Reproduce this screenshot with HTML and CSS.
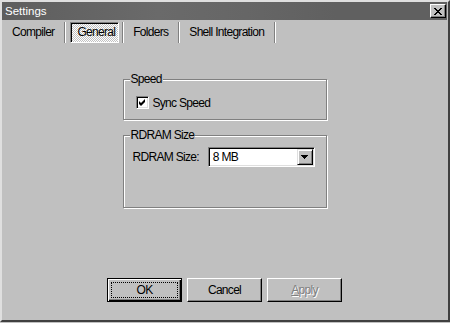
FILE: index.html
```html
<!DOCTYPE html>
<html lang="en">
<head>
    <meta charset="UTF-8">
    <meta name="viewport" content="width=device-width, initial-scale=1.0">
    <title>Settings</title>
    <link rel="stylesheet" href="styles.css">
</head>
<body>
    <div class="window">
        <!-- Title bar -->
        <div class="titlebar">
            <span class="title">Settings</span>
            <button class="close" title="Close">
                <svg width="8" height="7" viewBox="0 0 8 7"><path d="M0 0h2v1H0zM6 0h2v1H6zM1 1h2v1H1zM5 1h2v1H5zM2 2h4v1H2zM3 3h2v1H3zM2 4h4v1H2zM1 5h2v1H1zM5 5h2v1H5zM0 6h2v1H0zM6 6h2v1H6z" fill="#000"/></svg>
            </button>
        </div>

        <!-- Tabs -->
        <div class="tabs">
            <div class="tab">Compiler</div>
            <div class="tab active"><span>General</span></div>
            <div class="tab">Folders</div>
            <div class="tab">Shell Integration</div>
        </div>

        <!-- General page -->
        <div class="panel">
            <fieldset class="group">
                <legend>Speed</legend>
                <label class="check">
                    <span class="checkbox">
                        <svg width="13" height="13" viewBox="0 0 13 13"><polygon points="3,5 5,7 9,3 9,6 5,10 3,8" fill="#000"/></svg>
                    </span>
                    Sync Speed
                </label>
            </fieldset>

            <fieldset class="group tall">
                <legend>RDRAM Size</legend>
                <div class="field">
                    <span class="field-label">RDRAM Size:</span>
                    <div class="combo">
                        <span class="combo-value">8 MB</span>
                        <span class="combo-arrow">
                            <svg width="7" height="4" viewBox="0 0 7 4"><path d="M0 0h7v1H0zM1 1h5v1H1zM2 2h3v1H2zM3 3h1v1H3z" fill="#000"/></svg>
                        </span>
                    </div>
                </div>
            </fieldset>
        </div>

        <!-- Dialog buttons -->
        <div class="buttons">
            <button class="btn default"><span>OK</span></button>
            <button class="btn"><span>Cancel</span></button>
            <button class="btn disabled"><span><u>A</u>pply</span></button>
        </div>
    </div>
</body>
</html>
```

FILE: styles.css
```css
* {
    box-sizing: border-box;
}
body {
    margin: 0;
    background-color: #c0c0c0;
    font-family: "Liberation Sans", Arial, sans-serif;
    font-size: 12px;
    letter-spacing: -0.7px;
    color: #000;
}
.window {
    width: 450px;
    height: 322px;
    display: flex;
    flex-direction: column;
    border: 2px solid;
    border-color: #dfdfdf #404040 #404040 #dfdfdf;
    padding-right: 1px;
}

/* title bar */
.titlebar {
    height: 18px;
    display: flex;
    align-items: center;
    justify-content: space-between;
    padding: 0 1px 0 3px;
    background: linear-gradient(90deg, #5e5e5e, #6a6a6a 35%, #666 55%, #606060 75%);
    color: #fff;
    font-size: 11.5px;
    letter-spacing: 0;
}
.close {
    width: 16px;
    height: 14px;
    padding: 0;
    display: flex;
    align-items: center;
    justify-content: center;
    background-color: #c0c0c0;
    border: 1px solid;
    border-color: #fff #000 #000 #fff;
    box-shadow: inset -1px -1px #808080;
}

/* tabs */
.tabs {
    display: flex;
    height: 21px;
    margin-top: 2px;
}
.tab {
    padding: 0 10px;
    line-height: 21px;
    border-right: 1px solid #808080;
    box-shadow: 1px 0 #fff;
}
.tab.active {
    padding: 0 3px 0 5px;
}
.tab.active span {
    display: block;
    height: 100%;
    padding: 0 3px 0 6px;
    line-height: 19px;
    border: 1px solid;
    border-color: #808080 #fff #fff #808080;
    box-shadow: inset 1px 1px #000;
    background: repeating-conic-gradient(#fff 0 25%, #c0c0c0 0 50%) 0 0 / 2px 2px;
}

/* group boxes */
.panel {
    flex: 1;
    padding-top: 29px;
}
.group {
    width: 204px;
    min-width: 0;
    margin: 0 auto;
    padding: 8px 9px 9px;
    border: 1px solid #808080;
    box-shadow: 1px 1px #fff, inset 1px 1px #fff;
}
.group.tall {
    margin-top: 8px;
    padding: 4px 9px 40px;
}
.group legend {
    padding: 0 1px;
    margin-left: -3px;
    line-height: 15px;
    background-color: #c0c0c0;
}
.check {
    display: flex;
    align-items: center;
    gap: 4px;
    height: 15px;
    margin-left: 3px;
}
.checkbox {
    width: 13px;
    height: 13px;
    display: block;
    background-color: #fff;
    border: 1px solid;
    border-color: #808080 #fff #fff #808080;
    box-shadow: inset 1px 1px #000, inset -1px -1px #dfdfdf;
}
.checkbox svg {
    display: block;
    margin: -1px;
}
.field {
    display: flex;
    align-items: center;
    gap: 9px;
}
.field-label {
    white-space: nowrap;
    flex-shrink: 0;
}
.combo {
    width: 107px;
    height: 20px;
    display: flex;
    padding: 1px;
    background-color: #fff;
    border: 1px solid;
    border-color: #808080 #fff #fff #808080;
    box-shadow: inset 1px 1px #000, inset -1px -1px #dfdfdf;
}
.combo-value {
    flex: 1;
    padding: 1px 0 0 3px;
    line-height: 15px;
}
.combo-arrow {
    width: 16px;
    height: 16px;
    display: flex;
    align-items: center;
    justify-content: center;
    background-color: #c0c0c0;
    border: 1px solid;
    border-color: #dfdfdf #000 #000 #dfdfdf;
    box-shadow: inset 1px 1px #fff, inset -1px -1px #808080;
}

/* dialog buttons */
.buttons {
    display: flex;
    justify-content: center;
    gap: 5px;
    padding-bottom: 18px;
}
.btn {
    width: 75px;
    height: 24px;
    padding: 0;
    font: inherit;
    letter-spacing: inherit;
    color: #000;
    background-color: #c0c0c0;
    border: 1px solid;
    border-color: #fff #000 #000 #fff;
    box-shadow: inset -1px -1px #808080;
}
.btn span {
    display: flex;
    align-items: center;
    justify-content: center;
    height: 100%;
}
.btn.default {
    padding: 3px;
    border-color: #000;
    box-shadow: inset 1px 1px #fff, inset -1px -1px #000, inset -2px -2px #808080;
}
.btn.default span {
    border: 1px dotted #000;
}
.btn.disabled {
    color: #808080;
    text-shadow: 1px 1px 0 #fff;
}
```
